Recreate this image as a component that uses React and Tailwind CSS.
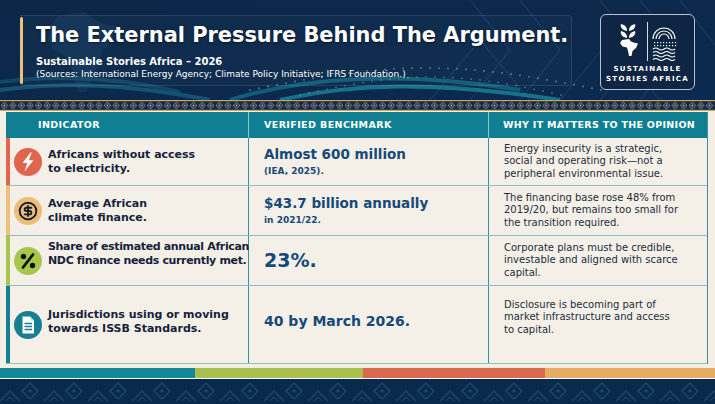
import React from "react";
import { CircleDollarSign } from "lucide-react";

const Bolt = () => (
  <svg width="28" height="28" viewBox="0 0 28 28">
    <circle cx="14" cy="14" r="14" fill="#e0654d" />
    <path d="M16.5 4.5 L8.5 15 H13.2 L10.5 23.5 L19.5 12.2 H14.8 L17.8 4.5 Z" fill="#fff" />
  </svg>
);

const Dollar = () => (
  <div className="w-[28px] h-[28px] rounded-full bg-[#efbd78] flex items-center justify-center">
    <CircleDollarSign size={20} strokeWidth={2.3} color="#15202e" />
  </div>
);

const Percent = () => (
  <svg width="28" height="28" viewBox="0 0 28 28">
    <circle cx="14" cy="14" r="14" fill="#a7c74b" />
    <circle cx="9.5" cy="9.5" r="2.7" fill="#111" />
    <circle cx="18.5" cy="18.5" r="2.7" fill="#111" />
    <path d="M19 7.5 L9 20.5" stroke="#111" strokeWidth="2.8" strokeLinecap="round" />
  </svg>
);

const Doc = () => (
  <svg width="28" height="28" viewBox="0 0 28 28">
    <circle cx="14" cy="14" r="14" fill="#167f91" />
    <path d="M8.5 5.5 H16 L20 9.5 V22.5 H8.5 Z" fill="#fff" />
    <path d="M16 5.5 V9.5 H20" fill="#cfe3e6" />
    <path d="M10.5 12.5 H18 M10.5 15.5 H18 M10.5 18.5 H18" stroke="#167f91" strokeWidth="1.5" />
  </svg>
);

const rows = [
  {
    h: "h-[48px]",
    accent: "border-[#e0674f]",
    icon: <Bolt />,
    label: ["Africans without access", "to electricity."],
    labelCls: "",
    value: "Almost 600 million",
    valueCls: "text-[13.5px]",
    sub: "(IEA, 2025).",
    why: ["Energy insecurity is a strategic,", "social and operating risk\u2014not a", "peripheral environmental issue."],
  },
  {
    h: "h-[50px]",
    accent: "border-[#f0c07a]",
    icon: <Dollar />,
    label: ["Average African", "climate finance."],
    labelCls: "",
    value: "$43.7 billion annually",
    valueCls: "text-[13.5px]",
    sub: "in 2021/22.",
    why: ["The financing base rose 48% from", "2019/20, but remains too small for", "the transition required."],
  },
  {
    h: "h-[50px]",
    accent: "border-[#a8c64c]",
    icon: <Percent />,
    label: ["Share of estimated annual African", "NDC finance needs currently met."],
    labelCls: "self-start pt-[4px] text-[10.5px] tracking-[-0.35px]",
    value: "23%.",
    valueCls: "text-[19px]",
    why: ["Corporate plans must be credible,", "investable and aligned with scarce", "capital."],
  },
  {
    h: "h-[78px]",
    accent: "border-[#127f92]",
    icon: <Doc />,
    label: ["Jurisdictions using or moving", "towards ISSB Standards."],
    labelCls: "mb-[6px]",
    value: "40 by March 2026.",
    valueCls: "text-[14px]",
    why: ["Disclosure is becoming part of", "market infrastructure and access", "to capital."],
  },
];

const Logo = () => (
  <div className="w-[95px] h-[76px] mt-[14px] mr-[20px] rounded-[6px] border border-[#b9c3cf] bg-[#0e2643] flex flex-col items-center">
    <svg width="95" height="48" viewBox="0 0 95 48" className="shrink-0">
      <g fill="#fff">
        <path d="M21 9 C20 12 22 15 27 16 C27 12 25 10 21 9 Z" />
        <path d="M35 9 C36 12 34 15 29 16 C29 12 31 10 35 9 Z" />
        <path d="M21 16 C20 19 22 22 27 23 C27 19 25 17 21 16 Z" />
        <path d="M35 16 C36 19 34 22 29 23 C29 19 31 17 35 16 Z" />
        <path d="M22 25 L29 24 L31 26.5 L33.5 27.5 L38 28.5 L36 33 L32.5 36 L31.5 41 L29 41 L28 36 L27 32.5 L22.5 31.5 L20 28 Z" />
      </g>
      <path d="M47.5 7 V46" stroke="#d7dde5" strokeWidth="1" />
      <g fill="none" stroke="#fff" strokeWidth="1.1">
        <path d="M53 24 A11 11 0 0 1 75 24" />
        <path d="M56 24 A8 8 0 0 1 72 24" />
        <path d="M59 24 A5 5 0 0 1 69 24" />
        <path d="M53 34 q2.75 -2 5.5 0 t5.5 0 t5.5 0 t5.5 0" />
        <path d="M53 37.5 q2.75 -2 5.5 0 t5.5 0 t5.5 0 t5.5 0" />
        <path d="M53 41 q2.75 -2 5.5 0 t5.5 0 t5.5 0 t5.5 0" />
        <path d="M53 44.5 q2.75 -2 5.5 0 t5.5 0 t5.5 0 t5.5 0" />
      </g>
      <g fill="#fff">
        {[54, 57, 60, 63, 66, 69, 72, 75].map((x) => (
          <React.Fragment key={x}>
            <rect x={x} y="27" width="1.2" height="1.2" />
            <rect x={x} y="30" width="1.2" height="1.2" />
          </React.Fragment>
        ))}
      </g>
    </svg>
    <div className="text-white font-bold text-[7px] leading-[10px] tracking-[1.3px] text-center mt-[1px]">
      SUSTAINABLE
      <br />
      STORIES AFRICA
    </div>
  </div>
);

const HeaderDecor = () => (
  <svg className="absolute inset-0" width="715" height="100" viewBox="0 0 715 100">
    <defs>
      <linearGradient id="hg" x1="0" y1="0" x2="1" y2="1">
        <stop offset="0" stopColor="#0c2748" />
        <stop offset="1" stopColor="#0b2a4f" />
      </linearGradient>
    </defs>
    <rect width="715" height="100" fill="url(#hg)" />
    <path
      d="M58 16 L84 12 L96 20 L104 24 L116 26 L112 40 L102 52 L98 66 L92 80 L86 92 L78 92 L74 76 L70 60 L62 54 L54 50 L48 40 L50 26 Z"
      fill="#163a60"
      opacity="0.6"
    />
    <g fill="none" stroke="#1b3f68" strokeWidth="1.5" opacity="0.7">
      <path d="M470 0 L510 50 L470 100 M520 0 L560 50 L520 100 M600 0 L640 50 L600 100 M680 0 L715 45" />
      <path d="M430 100 L480 40 L530 100 M560 100 L610 40 L660 100" />
      <path d="M640 0 L680 50 L640 100" />
    </g>
    <g fill="none" strokeWidth="4" opacity="0.75">
      <path d="M230 100 C300 78 400 70 520 90" stroke="#136f88" />
      <path d="M280 100 C350 84 430 80 560 100" stroke="#1a89a0" />
      <path d="M0 82 C60 74 120 78 180 92" stroke="#14506f" />
      <path d="M0 90 C70 80 140 86 210 100" stroke="#17607f" />
    </g>
    <g fill="#6bb6a6" opacity="0.7">
      {Array.from({ length: 40 }).map((_, i) => {
        const x = 250 + i * 9;
        const y = 90 - Math.sin((i / 39) * Math.PI) * 22;
        return <circle key={i} cx={x} cy={y} r="0.9" />;
      })}
      {Array.from({ length: 30 }).map((_, i) => {
        const x = 300 + i * 9;
        const y = 95 - Math.sin((i / 29) * Math.PI) * 18;
        return <circle key={"b" + i} cx={x} cy={y} r="0.8" />;
      })}
    </g>
  </svg>
);

const Band = () => (
  <svg width="715" height="11" viewBox="0 0 715 11" className="block">
    <defs>
      <pattern id="dia" width="8.6" height="11" patternUnits="userSpaceOnUse">
        <path d="M4.3 2.2 L7.6 5.5 L4.3 8.8 L1 5.5 Z" fill="none" stroke="#b9ab86" strokeWidth="0.8" />
        <circle cx="4.3" cy="5.5" r="0.9" fill="#c9b98f" />
      </pattern>
    </defs>
    <rect width="715" height="11" fill="#14294a" />
    <rect width="715" height="11" fill="url(#dia)" />
    <rect width="715" height="1.2" fill="#cfa55c" />
    <rect y="9.8" width="715" height="1.2" fill="#cfa55c" />
  </svg>
);

const Footer = () => (
  <svg width="715" height="25" viewBox="0 0 715 25" className="block">
    <defs>
      <pattern id="ft" width="44" height="25" patternUnits="userSpaceOnUse">
        <path d="M0 22 L10 12 L20 22 M22 12 L30 4 L38 12 L30 20 Z" fill="none" stroke="#1d4a72" strokeWidth="1.2" />
        <circle cx="30" cy="12" r="1.6" fill="#1d4a72" />
        <path d="M6 22 L10 18 L14 22" fill="none" stroke="#1d4a72" strokeWidth="1" />
      </pattern>
    </defs>
    <rect width="715" height="25" fill="#0a2a4b" />
    <rect width="715" height="25" fill="url(#ft)" />
  </svg>
);

export default function App() {
  return (
    <div className="w-[715px] h-[404px] overflow-hidden bg-[#f3efe5] flex flex-col font-['DejaVu_Sans','Liberation_Sans',sans-serif]">
      {/* header */}
      <div className="relative h-[100px] shrink-0 overflow-hidden">
        <HeaderDecor />
        <div className="relative flex justify-between">
          <div className="mt-[15px] ml-[20px] w-[552px] h-[71px] flex border border-l-0 border-white/10 rounded-r-[4px] bg-white/[0.02]">
            <div className="w-[3px] my-[1px] rounded-full bg-[#e9c27a] shrink-0" />
            <div className="pl-[13px] pt-[6px] whitespace-nowrap">
              <div className="text-white font-bold text-[20.9px] leading-[26px] [text-shadow:0_1px_2px_rgba(0,0,0,0.5)]">
                The External Pressure Behind The Argument.
              </div>
              <div className="text-white font-bold text-[10px] leading-[13px] mt-[7px]">
                Sustainable Stories Africa &ndash; 2026
              </div>
              <div className="text-white text-[9px] leading-[13px]">
                (Sources: International Energy Agency; Climate Policy Initiative; IFRS Foundation.)
              </div>
            </div>
          </div>
          <Logo />
        </div>
      </div>

      <Band />

      {/* table */}
      <div className="mt-[1px] ml-[6px] w-[702px] border-r border-[#3b8f9c] shrink-0">
        <div className="grid grid-cols-[243px_240px_219px] h-[26px] bg-[#107f92] text-white font-bold text-[9.5px] tracking-[0.4px] whitespace-nowrap">
          <div className="flex items-center pl-[32px] border-r border-[#8fc3ca]">INDICATOR</div>
          <div className="flex items-center pl-[15px] border-r border-[#8fc3ca]">VERIFIED BENCHMARK</div>
          <div className="flex items-center pl-[14px] tracking-[0.3px]">WHY IT MATTERS TO THE OPINION</div>
        </div>
        {rows.map((r, i) => (
          <div
            key={i}
            className={`grid grid-cols-[243px_240px_219px] ${r.h} border-b border-[#8fbfc5] bg-[#f4f0e7] whitespace-nowrap`}
          >
            <div className={`flex items-center border-l-4 ${r.accent} pl-[4px] border-r border-r-[#3b8f9c] min-w-0`}>
              <div className="shrink-0">{r.icon}</div>
              <div className={`ml-[6px] text-[#14233b] font-bold text-[11px] leading-[14px] ${r.labelCls}`}>
                {r.label[0]}
                <br />
                {r.label[1]}
              </div>
            </div>
            <div className={`flex flex-col justify-center pl-[15px] border-r border-[#3b8f9c] text-[#15497a] font-bold ${i === 3 ? "pb-[6px]" : ""}`}>
              <div className={`${r.valueCls} leading-[17px]`}>{r.value}</div>
              {r.sub && <div className="text-[9px] leading-[13px] mt-[2px]">{r.sub}</div>}
            </div>
            <div className={`flex flex-col justify-center pl-[15px] text-[#222d3b] text-[10px] leading-[12.4px] ${i === 3 ? "pb-[14px]" : ""}`}>
              {r.why.map((l, k) => (
                <div key={k}>{l}</div>
              ))}
            </div>
          </div>
        ))}
      </div>

      <div className="mt-[4px] h-[10px] flex shrink-0">
        <div className="w-[195px] bg-[#14889a]" />
        <div className="w-[168px] bg-[#a9bf4d]" />
        <div className="w-[182px] bg-[#d9694c]" />
        <div className="flex-1 bg-[#e6ad62]" />
      </div>
      <div className="h-[1px] bg-white shrink-0" />
      <Footer />
    </div>
  );
}
